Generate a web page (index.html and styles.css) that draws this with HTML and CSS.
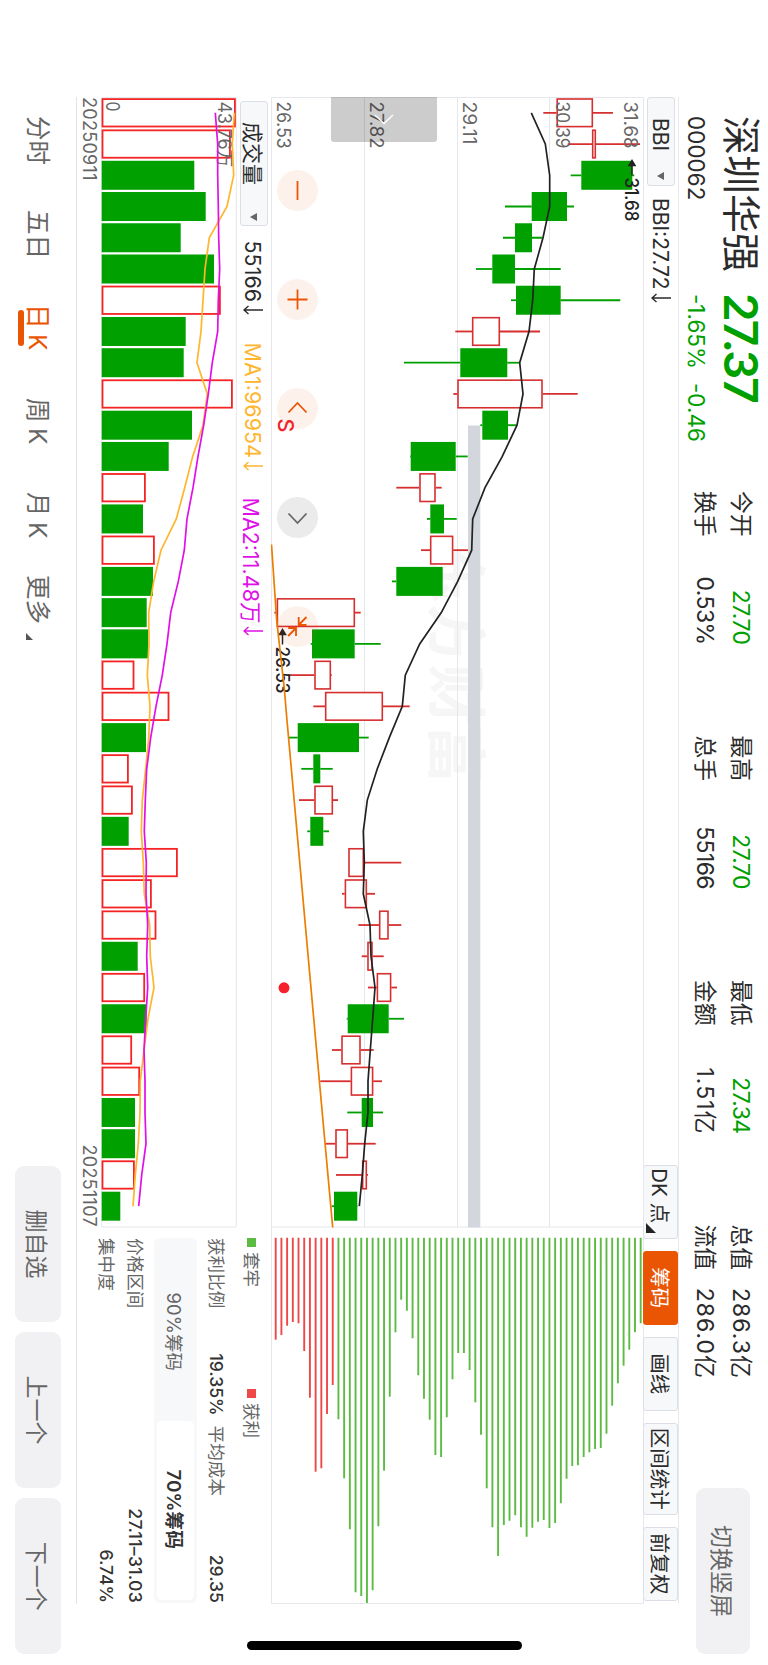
FILE: index.html
```html
<!DOCTYPE html>
<html lang="zh-CN">
<head>
    <meta charset="UTF-8">
    <meta name="viewport" content="width=device-width, initial-scale=1.0">
    <title>深圳华强 000062</title>
    <link rel="stylesheet" href="styles.css">
</head>
<body>
    <div class="screen">
        <header class="header">
            <div class="stock">
                <div class="stock-top"><span class="stock-name">深圳华强</span><span class="price">27.37</span></div>
                <div class="stock-sub"><span class="code">000062</span><span class="change">-1.65%</span><span class="diff">-0.46</span></div>
            </div>
            <div class="stats">
                <div class="stat"><span>今开</span><b class="down">27.70</b><span>换手</span><b>0.53%</b></div>
                <div class="stat"><span>最高</span><b class="down">27.70</b><span>总手</span><b>55166</b></div>
                <div class="stat"><span>最低</span><b class="down">27.34</b><span>金额</span><b class="yi">1.51亿</b></div>
                <div class="stat"><span>总值</span><b class="yi">286.3亿</b><span>流值</span><b class="yi">286.0亿</b></div>
            </div>
            <button class="btn switch-btn">切换竖屏</button>
        </header>

        <div class="toolbar">
            <button class="picker bbi-picker">BBI<i class="caret"></i></button>
            <span class="bbi-value">BBI:27.72<svg class="arrow" viewBox="0 0 10 20"><path d="M5 0V19M1 14.5L5 19L9 14.5"/></svg></span>
            <div class="tools">
                <button class="tool dk">DK 点<i class="corner"></i></button>
                <button class="tool active">筹码</button>
                <button class="tool">画线</button>
                <button class="tool wide">区间统计</button>
                <button class="tool">前复权</button>
            </div>
        </div>

        <div class="content">
            <div class="charts">
                <div class="main-chart">
                    <svg id="kline" width="1131" height="373" viewBox="96.5 124 1131 373"></svg>
                    <div class="side-tab"><svg width="20" height="20" viewBox="0 0 20 20"><path d="M6 1L14.5 10L6 19"/></svg></div>
                    <div class="float-btns">
                        <button class="round"><svg viewBox="0 0 41 41"><path d="M11 20.5H30"/></svg></button>
                        <button class="round"><svg viewBox="0 0 41 41"><path d="M10.5 20.5H30.5M20.5 10.5V30.5"/></svg></button>
                        <button class="round"><svg viewBox="0 0 41 41"><path d="M24.5 11.5L15 20.5L24.5 29.5"/></svg></button>
                        <button class="round off"><svg viewBox="0 0 41 41"><path d="M16.5 11.5L26 20.5L16.5 29.5"/></svg></button>
                        <button class="round"><svg viewBox="0 0 41 41"><path d="M11 11.5L19 19.3M19 11.5V19.3H11M30 29.8L22 22M22 29.8V22H30"/></svg></button>
                    </div>
                </div>
                <div class="vol-bar">
                    <button class="picker vol-picker">成交量<i class="caret"></i></button>
                    <span class="vol-now">55166<svg class="arrow" viewBox="0 0 10 20"><path d="M5 0V19M1 14.5L5 19L9 14.5"/></svg></span>
                    <span class="ma1">MA1:96954<svg class="arrow" viewBox="0 0 10 20"><path d="M5 0V19M1 14.5L5 19L9 14.5"/></svg></span>
                    <span class="ma2">MA2:11.48万<svg class="arrow" viewBox="0 0 10 20"><path d="M5 0V19M1 14.5L5 19L9 14.5"/></svg></span>
                </div>
                <svg id="volume" width="1131" height="136" viewBox="96.5 531 1131 136"></svg>
                <div class="dates"><span>20250911</span><span>20251107</span></div>
            </div>

            <aside class="chips">
                <svg id="chips" width="377" height="373" viewBox="1227 124 377 373"></svg>
                <div class="chip-info">
                    <div class="legend">
                        <span><i class="dot green"></i>套牢</span>
                        <span><i class="dot red"></i>获利</span>
                    </div>
                    <div class="info-row cost">
                        <span>获利比例</span><b>19.35%</b><span>平均成本</span><b>29.35</b>
                    </div>
                    <div class="segment">
                        <button>90%筹码</button>
                        <button class="selected">70%筹码</button>
                    </div>
                    <div class="info-row"><span>价格区间</span><b class="range">27.11–31.03</b></div>
                    <div class="info-row"><span>集中度</span><b>6.74%</b></div>
                </div>
            </aside>
        </div>

        <footer class="footer">
            <nav class="periods">
                <a>分时</a>
                <a>五日</a>
                <a class="current">日 K</a>
                <a>周 K</a>
                <a class="month">月 K</a>
                <a class="more">更多<i class="corner"></i></a>
            </nav>
            <div class="actions">
                <button class="btn">删自选</button>
                <button class="btn">上一个</button>
                <button class="btn">下一个</button>
            </div>
        </footer>
        <div class="home-bar"></div>
    </div>
    <script src="chart.js"></script>
</body>
</html>
```
FILE: styles.css
```css
* {
    box-sizing: border-box;
}
html, body {
    margin: 0;
    padding: 0;
    width: 768px;
    height: 1665px;
    overflow: hidden;
    background-color: #fff;
}
/* landscape screen, turned to fit the portrait window */
.screen {
    position: relative;
    width: 1665px;
    height: 768px;
    overflow: hidden;
    transform-origin: 0 0;
    transform: translateX(768px) rotate(90deg);
    display: flex;
    flex-direction: column;
    padding-left: 97px;
    font-family: Inter, "Noto Sans CJK SC", sans-serif;
    color: #2b2b2b;
}
button {
    font-family: inherit;
    border: none;
    padding: 0;
    color: inherit;
}
b {
    font-weight: 400;
}
svg {
    display: block;
}
.down {
    color: #00a000;
}
.btn {
    background-color: #f1f1f3;
    color: #666;
    border-radius: 9px;
    font-size: 23px;
}

/* header */
.header {
    display: flex;
    height: 89px;
    flex: none;
}
.stock {
    width: 394px;
    padding: 4px 0 0 19px;
}
.stock-top {
    display: flex;
    align-items: center;
    height: 46px;
}
.stock-name {
    width: 177px;
    font-size: 39px;
    line-height: 46px;
}
.price {
    font-size: 46px;
    line-height: 46px;
    font-weight: 600;
    letter-spacing: -2px;
    color: #00a000;
}
.stock-sub {
    display: flex;
    height: 44px;
    line-height: 44px;
    font-size: 22.5px;
}
.code {
    width: 178px;
}
.change, .diff {
    color: #00a000;
}
.change {
    width: 89px;
}
.stats {
    display: flex;
    gap: 91px;
    padding-top: 9px;
}
.stat {
    display: grid;
    grid-template-columns: auto auto;
    grid-auto-rows: 36px;
    width: 153.5px;
    line-height: 36px;
    font-size: 22.8px;
}
.stat b {
    text-align: right;
    font-size: 23px;
    letter-spacing: -0.6px;
}
.stat .yi {
    margin-right: -1px;
    letter-spacing: 1px;
}
.switch-btn {
    width: 166px;
    height: 54px;
    margin: 18px 0 0 110px;
}

/* indicator toolbar */
.toolbar {
    display: flex;
    align-items: center;
    width: 1506px;
    height: 35px;
    flex: none;
    border-top: 1px solid #e8e9ed;
    font-size: 21px;
}
.picker {
    display: flex;
    align-items: center;
    height: 28px;
    border: 1px solid #dcdfe5;
    border-radius: 3px;
    background-color: #f7f8fa;
    font-size: 21px;
}
.caret {
    border: 4px solid transparent;
    border-top: 7px solid #666;
    border-bottom: none;
}
.bbi-picker {
    width: 89px;
    padding: 0 5px 0 20px;
    justify-content: space-between;
}
.bbi-value {
    display: flex;
    align-items: center;
    margin-left: 12px;
}
.arrow {
    width: 10px;
    height: 20px;
    margin-left: 3px;
    fill: none;
    stroke: currentColor;
    stroke-width: 1.4;
}
.tools {
    display: flex;
    gap: 11.5px;
    margin-left: auto;
    margin-right: 2px;
}
.tool {
    position: relative;
    width: 74.5px;
    height: 35px;
    border: 1px solid #dcdfe5;
    border-radius: 3px;
    background-color: #f7f8fa;
    font-size: 20.5px;
}
.tool.wide {
    width: 92.5px;
}
.tool.active {
    background-color: #ea5504;
    border-color: #ea5504;
    color: #fff;
}
.tool.dk {
    padding-right: 12px;
    white-space: nowrap;
}
.corner {
    border-left: 10px solid transparent;
    border-bottom: 10px solid #222;
}
.tool .corner {
    position: absolute;
    right: 5px;
    bottom: 2px;
}

/* charts */
.content {
    display: flex;
    height: 568px;
    width: 1507px;
    flex: none;
    border-bottom: 1px solid #e3e4e8;
}
.charts {
    width: 1130px;
}
.charts > svg, .main-chart > svg {
    margin-left: -0.5px;
}
.main-chart {
    position: relative;
}
.side-tab {
    position: absolute;
    left: 0;
    top: 206.5px;
    width: 44.5px;
    height: 106.5px;
    padding: 43.5px 0 0 12px;
    border-radius: 0 3px 3px 0;
    background-color: rgba(0, 0, 0, 0.2);
}
.side-tab path {
    fill: none;
    stroke: #fff;
    stroke-width: 1.4;
}
.float-btns {
    position: absolute;
    left: 72.5px;
    top: 326px;
    display: flex;
    gap: 68px;
}
.round {
    width: 41px;
    height: 41px;
    border-radius: 50%;
    background-color: rgba(234, 85, 4, 0.08);
    color: #ea5504;
}
.round.off {
    background-color: #ebebeb;
    color: #666;
}
.round path {
    fill: none;
    stroke: currentColor;
    stroke-width: 1.8;
}
.vol-bar {
    display: flex;
    align-items: center;
    height: 34px;
    font-size: 21.5px;
}
.vol-bar span {
    display: flex;
    align-items: center;
    padding-top: 2px;
}
.vol-picker {
    width: 124.5px;
    margin-left: 4px;
    padding: 0 4px 0 20px;
    justify-content: space-between;
}
.vol-now {
    width: 102px;
    margin-left: 15px;
}
.ma1 {
    width: 155px;
    color: #ffb52e;
}
.ma2 {
    color: #e010e8;
}
.dates {
    display: flex;
    justify-content: space-between;
    line-height: 24px;
    font-size: 18px;
    letter-spacing: 0.3px;
    color: #666;
}

/* chip distribution */
.chips {
    width: 377px;
}
.chip-info {
    padding-left: 11px;
    width: 376px;
    font-size: 17.6px;
    color: #666;
}
.chip-info b {
    color: #333;
    font-weight: 500;
}
.chip-info .range {
    letter-spacing: 0.3px;
}
.legend {
    display: flex;
    height: 40px;
    line-height: 40px;
}
.legend span {
    width: 151px;
}
.dot {
    display: inline-block;
    width: 9px;
    height: 9px;
    margin-right: 5px;
    vertical-align: 2px;
}
.green {
    background-color: #5cbb42;
}
.red {
    background-color: #ee4848;
}
.info-row {
    display: flex;
    justify-content: space-between;
    line-height: 28.5px;
}
.info-row.cost {
    line-height: 30px;
    margin-bottom: 4px;
}
.info-row.cost b:nth-of-type(1) {
    margin-left: 45px;
    margin-right: 10px;
}
.info-row.cost b:nth-of-type(2) {
    margin-left: auto;
}
.segment {
    display: flex;
    height: 43px;
    margin-bottom: 5px;
    padding: 3px;
    border-radius: 6px;
    background-color: #f7f8fa;
}
.segment button {
    flex: 1;
    padding-left: 2px;
    border-radius: 5px;
    background: none;
    font-size: 18.5px;
}
.segment .selected {
    padding: 0 2px 0 0;
    background-color: #fff;
    color: #333;
    font-size: 18.8px;
    font-weight: 600;
}

/* footer */
.footer {
    display: flex;
    justify-content: space-between;
    width: 1557px;
    flex: 1;
    padding-top: 15px;
}
.periods {
    display: flex;
    padding-left: 19px;
    font-size: 24.5px;
    line-height: 46px;
    word-spacing: -1.5px;
    color: #666;
}
.periods a {
    width: 94px;
    white-space: nowrap;
}
.periods .month {
    width: 83px;
}
.periods .current {
    color: #ea5504;
    position: relative;
}
.periods .current::after {
    content: "";
    position: absolute;
    left: 6px;
    top: 37px;
    width: 36px;
    height: 5.5px;
    border-radius: 3px;
    background-color: #ea5504;
}
.periods .corner {
    display: inline-block;
    margin-left: 9px;
    border-left-width: 7px;
    border-bottom: 7px solid #555;
    vertical-align: -3px;
}
.actions {
    display: flex;
    gap: 10.5px;
}
.actions .btn {
    width: 155.6px;
    height: 46px;
}
.home-bar {
    position: absolute;
    left: 1641px;
    top: 246px;
    width: 9px;
    height: 275px;
    border-radius: 5px;
    background-color: #000;
}

/* svg chart parts */
.grid {
    stroke: #e6e7ec;
    stroke-width: 1;
    fill: none;
}
.label {
    font-size: 18px;
    fill: #666;
}
.mark {
    font-size: 18px;
    font-weight: 500;
    fill: #222;
}
.watermark {
    font-size: 60px;
    font-weight: 700;
    fill: #f6f6f6;
}
.up-bar {
    fill: #fff;
    stroke: #d62f2f;
    stroke-width: 1.6;
}
.vol-up {
    fill: #fff;
    stroke: #f52424;
    stroke-width: 1.8;
}
.down-bar {
    fill: #00a000;
}
.line {
    fill: none;
    stroke-width: 1.7;
}
```
FILE: chart.js
```js
// heights are measured upwards from the bottom edge of the screen
const H = 768;
const FIRST = 112.3, STEP = 31.24, HALF = 14.5;

// [low, body low, body high, high, up]
const candles = [
    [543.3, 556.5, 593, 613, 1], [567.7, 592, 596, 640, 1], [570.7, 581.3, 632.3, 634.3, 0],
    [505, 531.7, 567, 574, 0], [503, 515, 532, 542.3, 0], [476, 492.3, 515, 560.7, 0],
    [511, 516, 560.7, 620.3, 0], [455.3, 472, 500, 540, 1], [404, 460.3, 507.3, 519, 0],
    [453.3, 457.3, 542.7, 577.7, 1], [480.3, 482.3, 508, 516.3, 0], [410, 410.7, 455.7, 467.7, 0],
    [396.3, 419.3, 435.7, 441.7, 1], [427, 430.3, 444, 456.7, 0], [421, 430, 453.3, 468, 1],
    [392, 396.3, 442.7, 442.7, 0], [274.3, 276.7, 355, 360.7, 1], [310.7, 312, 354.7, 380.7, 0],
    [288, 314.3, 331, 331.7, 1], [313.3, 325, 383, 409.7, 1], [288.7, 297.7, 359, 368.7, 0],
    [301.3, 313.3, 320.3, 332.7, 0], [299, 314.3, 333, 338, 1], [307.3, 310.3, 323.3, 329, 0],
    [348.3, 348.3, 364, 401.3, 1], [342, 344.7, 367, 375, 1], [358.3, 379, 388.7, 401.3, 1],
    [361.7, 367.3, 372.7, 383.7, 1], [368, 376.7, 391.3, 397, 1], [346.7, 347.7, 388.7, 404, 0],
    [332, 341.3, 360.7, 373.7, 1], [320.3, 350.7, 373.3, 382, 1], [347.3, 361.7, 373, 383, 0],
    [325.7, 335.3, 348, 375.7, 1], [336, 362, 367, 368, 1], [331.7, 334, 357.3, 357.7, 0]
];
const bbi = [531.3, 545.3, 549.7, 549.7, 543, 534.3, 532.7, 529, 519.7, 523, 517, 502.3, 485, 472.7, 471.7, 457.7, 441.3, 419.7,
    405.3, 402.3, 389.3, 377.3, 367.3, 363.3, 364.3, 363.3, 370, 371, 375, 372.7, 370.3, 368, 368, 364.7, 362.3, 359.3];

const volumes = [235.7, 230.7, 194.3, 205.7, 180.7, 214, 220.7, 185.7, 183.7, 232.7, 192, 168.7, 145.7, 143, 154.7, 153, 146.7, 148.3,
    134.3, 169.3, 146, 128.7, 132.7, 128.7, 177.7, 151.7, 156.3, 137.7, 145, 146.7, 132, 140, 135, 135, 134.7, 120.3];
const volUp = '110000100100101000110110111010110010';
const ma1 = [234.3, 232.3, 233.7, 227, 209.3, 205, 203, 201, 197, 207.3, 203, 192.7, 184.7, 176.3, 161, 153.7, 148.7, 149,
    147.3, 150, 148.7, 145.7, 142.3, 141.3, 143.3, 144.3, 149.7, 150.3, 154, 148, 144, 140.3, 140, 138.3, 135.3, 133];
const ma2 = [215.3, 217.7, 217.7, 218.3, 218.7, 219.7, 218.3, 217.7, 212.3, 208.3, 203.7, 198, 193, 187, 184.3, 178.3, 170.7, 167,
    162.3, 156, 150.7, 146.7, 145.3, 144.3, 146.3, 146, 147.7, 146.7, 147.7, 145.7, 144, 145, 145, 146, 141.7, 138.7];

// right end of every chip line, lowest price first
const chips = [1339.7, 1335, 1325.7, 1322, 1323.3, 1351, 1397.7, 1471.7, 1468.3, 1414, 1385,
    1419.3, 1478.3, 1529.3, 1592.3, 1596, 1603, 1590.3, 1526.3, 1470.7, 1396.7, 1332.3, 1299.7, 1310.7, 1338.3,
    1375.3, 1398.7, 1419.7, 1455, 1457, 1417.3, 1379.3, 1353, 1353, 1370, 1402.3, 1434.7, 1488.3, 1527.3, 1556,
    1525, 1520.7, 1515.3, 1527.3, 1536.7, 1527.7, 1521.7, 1520, 1528, 1523, 1503.3, 1478.7, 1466, 1465.3, 1457,
    1452.3, 1449, 1448, 1433.7, 1405.7, 1383.3, 1365.7, 1349.7, 1332.3, 1323.3];

const cx = i => FIRST + i * STEP;
const path = list => 'M' + list.map((v, i) => cx(i).toFixed(1) + ' ' + (H - v).toFixed(1)).join('L');
const rect = (x, y, w, h, cls) => `<rect x="${x}" y="${y}" width="${w}" height="${h}" class="${cls}"/>`;
const seg = (x1, y1, x2, y2, color, w) => `<path d="M${x1} ${y1}L${x2} ${y2}" stroke="${color}" stroke-width="${w}"/>`;
const text = (x, y, s, len, cls) => `<text x="${x}" y="${y}" textLength="${len}" lengthAdjust="spacingAndGlyphs" class="${cls}">${s}</text>`;

function drawKline() {
    let s = text(543, 334, '东方财富', 241, 'watermark');
    s += '<path class="grid" d="M97 124.5H1226.5V496.5H97ZM97 218.5H1227M97 310.5H1227M97 403.5H1227"/>';
    s += '<rect x="425" y="287.7" width="802" height="12.3" fill="#d3d7dd"/>';
    candles.forEach(([low, b1, b2, high, up], i) => {
        const x = cx(i), c = up ? '#d62f2f' : '#00a000';
        s += seg(x, H - low, x, H - b1, c, 1.8) + seg(x, H - b2, x, H - high, c, 1.8);
        if (up) s += rect(x - HALF + 0.7, H - b2 + 0.7, HALF * 2 - 1.4, Math.max(b2 - b1 - 1.4, 1), 'up-bar');
        else s += rect(x - HALF, H - b2, HALF * 2, b2 - b1, 'down-bar');
    });
    s += `<path class="line" stroke="#222" d="${path(bbi)}"/>`;
    s += '<path d="M175 136H161M165 133L160 136L165 139Z" stroke="#222" stroke-width="1.5" fill="#222"/>' + text(177, 143, '31.68', 44, 'mark');
    s += '<path d="M644 485.5H630M634 482.5L629 485.5L634 488.5Z" stroke="#222" stroke-width="1.5" fill="#222"/>' + text(646, 492.5, '26.53', 47, 'mark');
    s += '<path class="line" stroke="#ec7d00" d="M544 496.5L620 491.3L688 483.7L720 481L1040 452.3L1227 435.3"/>';
    s += '<text x="418" y="490" font-size="21.5" font-weight="500" fill="#f5222d">S</text>';
    s += '<circle cx="987.3" cy="484" r="5.5" fill="#f5222d"/>';
    [['31.68', 144], ['30.39', 212], ['29.11', 305.5], ['27.82', 398], ['26.53', 491]].forEach(([t, y]) => {
        s += text(101, y, t, t == '29.11' ? 43 : 47, 'label');
    });
    document.getElementById('kline').innerHTML = s;
}

function drawVolume() {
    let s = '<path class="grid" d="M97 531.7H1226.5V666.3H97Z"/>';
    volumes.forEach((v, i) => {
        const x = cx(i) - HALF, h = v - 101.7;
        if (volUp[i] == '1') s += rect(x + 0.8, H - v + 0.8, HALF * 2 - 1.6, h - 1.6, 'vol-up');
        else s += rect(x, H - v, HALF * 2, h, 'down-bar');
    });
    s += text(101, 550, '43.76万', 66, 'label') + text(101, 662, '0', 10, 'label');
    s += `<path class="line" stroke="#ffb52e" d="${path(ma1)}"/>`;
    s += `<path class="line" stroke="#e010e8" d="${path(ma2)}"/>`;
    document.getElementById('volume').innerHTML = s;
}

function drawChips() {
    let s = '<path class="grid" d="M1227 124.5H1603.5V496.5H1227"/>';
    chips.forEach((end, i) => {
        const y = H - 275.7 - i * 5.703;
        s += seg(1237.7, y, end, y, i < 11 ? '#ee4848' : '#5cbb42', 1.9);
    });
    document.getElementById('chips').innerHTML = s;
}

drawKline();
drawVolume();
drawChips();
```
